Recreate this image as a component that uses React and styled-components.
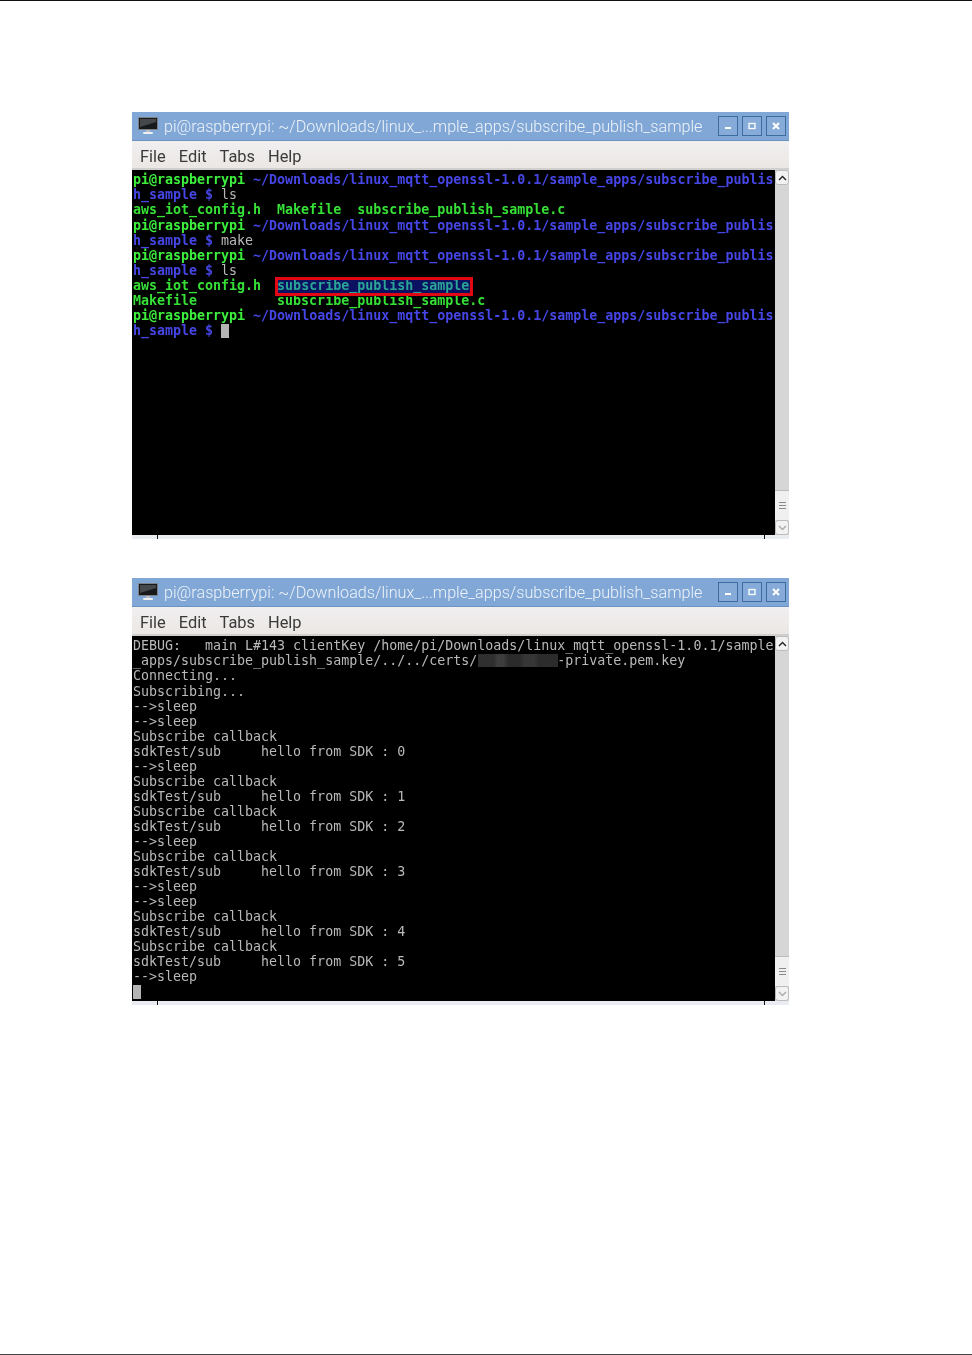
import React from 'react'
import styled, { createGlobalStyle } from 'styled-components'

const Global = createGlobalStyle`
	html, body {
		margin: 0;
		padding: 0;
		background: #fff;
	}
`

const Page = styled.div`
	width: 972px;
	height: 1355px;
	box-sizing: border-box;
	border-top: 1px solid #111;
	border-bottom: 1px solid #444;
	padding: 111px 183px 0 132px;
	display: flex;
	flex-direction: column;
	gap: 39px;
	overflow: hidden;
`

const Figure = styled.div`
	display: flex;
	flex-direction: column;
	width: 657px;
`

const Window = styled.div`
	display: flex;
	flex-direction: column;
	height: 423px;
	filter: blur(0.45px);
`

const TitleBar = styled.div`
	height: 29px;
	flex: none;
	display: flex;
	align-items: center;
	box-sizing: border-box;
	padding: 0 3px 1px 6px;
	background: #80a7d6;
	border-bottom: 1px solid #6a93c4;
`

const Title = styled.span`
	font-family: 'Roboto', 'Liberation Sans', sans-serif;
	font-size: 16.16px;
	font-weight: 300;
	color: #eef3f9;
	margin-left: 6px;
	padding-top: 2px;
	flex: 1;
	white-space: nowrap;
`

const WinButtons = styled.div`
	display: flex;
	gap: 4px;
`

const WinButton = styled.div`
	width: 20px;
	height: 20px;
	box-sizing: border-box;
	border: 1px solid #3f6c9e;
	background: #86abd8;
	display: flex;
	align-items: center;
	justify-content: center;
`

const MenuBar = styled.div`
	height: 29px;
	flex: none;
	box-sizing: border-box;
	display: flex;
	align-items: center;
	gap: 13px;
	padding: 3px 0 0 8px;
	background: linear-gradient(#f1eff0, #ebe7e4);
	border-bottom: 2px solid #d0cfcd;
	font-family: 'Roboto', 'Liberation Sans', sans-serif;
	font-size: 16.4px;
	color: #3a3a3a;
`

const Body = styled.div`
	flex: 1;
	display: flex;
	min-height: 0;
`

const Terminal = styled.pre`
	flex: 1;
	margin: 0;
	padding: 2.38px 0 0 1px;
	background: #000;
	color: #b9b9b9;
	font-family: 'DejaVu Sans Mono', 'Liberation Mono', monospace;
	font-size: 13.3px;
	line-height: 15.04px;
	overflow: hidden;
`

const Host = styled.span`
	color: #3df03d;
	font-weight: bold;
`

const Path = styled.span`
	color: #4646e6;
	font-weight: bold;
`

const Exe = styled.span`
	color: #36e036;
	font-weight: bold;
`

const Selected = styled.span`
	position: relative;
	display: inline-block;
	padding-right: 2px;
	color: #2aa596;
	font-weight: bold;
	background: #0c1262;
	&::after {
		content: '';
		position: absolute;
		top: -0.5px;
		bottom: -3.5px;
		left: -2px;
		right: -2px;
		border: 3px solid #e30613;
	}
`

const Redacted = styled.span`
	display: inline-block;
	width: 80px;
	height: 13px;
	margin: 0 -1px 0 1px;
	vertical-align: -2px;
	background: linear-gradient(
		90deg,
		#2f2f2f 0 20%,
		#3d3d3d 24% 32%,
		#2b2b2b 38% 52%,
		#363636 58% 70%,
		#2c2c2c 76% 100%
	);
`

const Cursor = styled.span`
	display: inline-block;
	width: 8px;
	height: 14px;
	vertical-align: -3px;
	background: #b4b4b4;
`

const Scrollbar = styled.div`
	width: 14px;
	flex: none;
	display: flex;
	flex-direction: column;
	background: #d6d6d6;
`

const ScrollBtn = styled.div`
	height: 15px;
	flex: none;
	box-sizing: border-box;
	display: flex;
	align-items: center;
	justify-content: center;
	background: #f2f2f2;
	border: 1px solid #bcbcbc;
	border-radius: 3px;
`

const Track = styled.div`
	flex: 1;
`

const Thumb = styled.div`
	height: 30px;
	flex: none;
	box-sizing: border-box;
	display: flex;
	flex-direction: column;
	align-items: center;
	justify-content: center;
	gap: 2px;
	background: #f0f0f0;
	border-top: 1px solid #bcbcbc;
`

const Grip = styled.div`
	width: 7px;
	height: 1px;
	background: #8a8a8a;
`

const Ledge = styled.div`
	height: 4px;
	background: #e9edf2;
	display: flex;
	justify-content: space-between;
	padding: 0 24px 0 25px;
`

const Tick = styled.div`
	width: 1px;
	background: #111;
`

function Chevron({ down, color = '#222' }) {
	return (
		<svg width='9' height='6' viewBox='0 0 9 6'>
			<path
				d={down ? 'M1 1l3.5 3.5L8 1' : 'M1 5l3.5-3.5L8 5'}
				fill='none'
				stroke={color}
				strokeWidth='1.4'
			/>
		</svg>
	)
}

function MonitorIcon() {
	return (
		<svg width='20' height='20' viewBox='0 0 20 20'>
			<rect x='0.5' y='1.5' width='19' height='12' rx='0.5' fill='#17191a' stroke='#7d8287' />
			<path d='M2 3h16v3L2 11z' fill='#45494c' />
			<rect x='8' y='14' width='4' height='2' fill='#b9bec4' />
			<rect x='5' y='16' width='10' height='2' rx='1' fill='#eceef0' />
		</svg>
	)
}

function Shell({ children }) {
	return (
		<Figure>
			<Window>
				<TitleBar>
					<MonitorIcon />
					<Title>pi@raspberrypi: ~/Downloads/linux_...mple_apps/subscribe_publish_sample</Title>
					<WinButtons>
						<WinButton>
							<svg width='8' height='8' viewBox='0 0 8 8'>
								<rect x='1' y='5' width='6' height='2' fill='#fff' />
							</svg>
						</WinButton>
						<WinButton>
							<svg width='8' height='8' viewBox='0 0 8 8'>
								<rect x='1' y='1.5' width='6' height='5' fill='none' stroke='#fff' strokeWidth='1.3' />
							</svg>
						</WinButton>
						<WinButton>
							<svg width='8' height='8' viewBox='0 0 8 8'>
								<path d='M1 1l6 6M7 1L1 7' stroke='#fff' strokeWidth='2' />
							</svg>
						</WinButton>
					</WinButtons>
				</TitleBar>
				<MenuBar>
					<span>File</span>
					<span>Edit</span>
					<span>Tabs</span>
					<span>Help</span>
				</MenuBar>
				<Body>
					<Terminal>{children}</Terminal>
					<Scrollbar>
						<ScrollBtn>
							<Chevron />
						</ScrollBtn>
						<Track />
						<Thumb>
							<Grip />
							<Grip />
							<Grip />
						</Thumb>
						<ScrollBtn>
							<Chevron down color='#aaa' />
						</ScrollBtn>
					</Scrollbar>
				</Body>
			</Window>
			<Ledge>
				<Tick />
				<Tick />
			</Ledge>
		</Figure>
	)
}

const LONG_PATH = '~/Downloads/linux_mqtt_openssl-1.0.1/sample_apps/subscribe_publis'

function Prompt() {
	return (
		<>
			<Host>pi@raspberrypi</Host> <Path>{LONG_PATH}</Path>
			{'\n'}
			<Path>h_sample $</Path>
		</>
	)
}

const sleep = '-->sleep\n'
const callback = 'Subscribe callback\n'
const hello = (n) => `sdkTest/sub     hello from SDK : ${n}\n`

export default function App() {
	return (
		<Page>
			<Global />
			<Shell>
				<Prompt /> ls{'\n'}
				<Exe>aws_iot_config.h  Makefile  subscribe_publish_sample.c</Exe>
				{'\n'}
				<Prompt /> make{'\n'}
				<Prompt /> ls{'\n'}
				<Exe>aws_iot_config.h  </Exe>
				<Selected>subscribe_publish_sample</Selected>
				{'\n'}
				<Exe>Makefile          subscribe_publish_sample.c</Exe>
				{'\n'}
				<Prompt /> <Cursor />
			</Shell>
			<Shell>
				{'DEBUG:   main L#143 clientKey /home/pi/Downloads/linux_mqtt_openssl-1.0.1/sample\n'}
				{'_apps/subscribe_publish_sample/../../certs/'}
				<Redacted />
				{'-private.pem.key\n'}
				{'Connecting...\nSubscribing...\n'}
				{sleep}
				{sleep}
				{callback}
				{hello(0)}
				{sleep}
				{callback}
				{hello(1)}
				{callback}
				{hello(2)}
				{sleep}
				{callback}
				{hello(3)}
				{sleep}
				{sleep}
				{callback}
				{hello(4)}
				{callback}
				{hello(5)}
				{sleep}
				<Cursor />
			</Shell>
		</Page>
	)
}
